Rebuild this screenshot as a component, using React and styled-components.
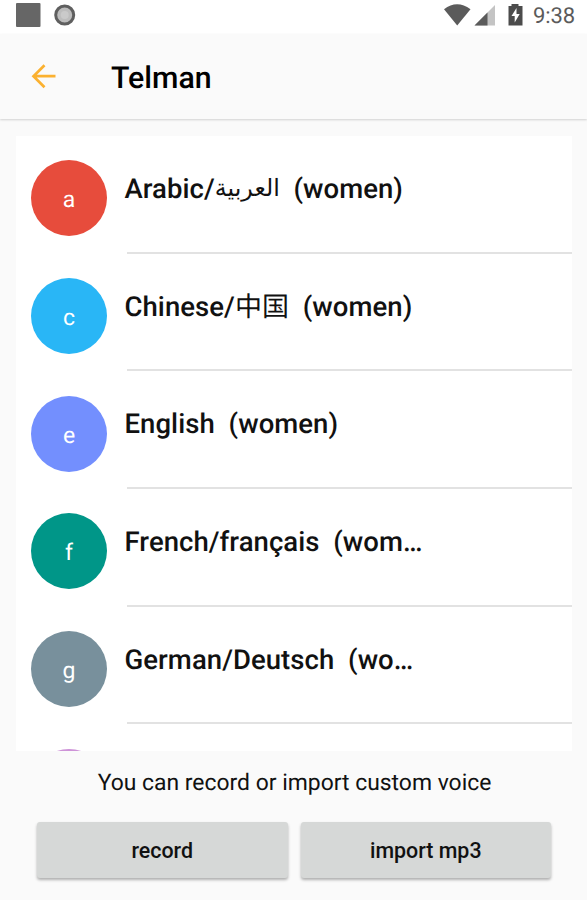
import styled, { createGlobalStyle } from "styled-components";

const GlobalStyle = createGlobalStyle`
    * {
        box-sizing: border-box;
    }

    body {
        margin: 0;
        background-color: #fafafa;
        color: #111;
        font-family: Roboto, "Noto Sans CJK SC", "DejaVu Sans", sans-serif;
        text-rendering: geometricPrecision;
    }
`

const Screen = styled.div`
    width: 100%;
    height: 900px;
    overflow: hidden;
    display: flex;
    flex-direction: column;
    background-color: #fafafa;
`

const StatusBar = styled.div`
    height: 34px;
    flex: none;
    display: flex;
    justify-content: space-between;
    background-color: white;
    color: #5b5b5b;
`

const StatusIcons = styled.svg`
    width: ${props => props.$width}px;
    height: 34px;
    display: block;
`

const StatusRight = styled.div`
    display: flex;
    padding-right: 12px;
`

const Clock = styled.span`
    font-size: 22px;
    line-height: 33px;
    letter-spacing: -0.1px;
`

const Header = styled.header`
    height: 85px;
    flex: none;
    display: flex;
    align-items: center;
    padding-left: 30px;
    background-color: #fafafa;
    box-shadow: 0 1px 2px rgb(0 0 0 / 16%);
`

const BackButton = styled.button`
    width: 28px;
    height: 28px;
    padding: 0;
    border: none;
    background: none;
    display: grid;
    place-content: center;
`

const Title = styled.h1`
    margin: 5px 0 0 53px;
    font-size: 30.3px;
    font-weight: 500;
    line-height: 36px;
    color: black;
`

const VoiceList = styled.ul`
    height: 615px;
    flex: none;
    margin: 17px 15px 0 16px;
    padding: 0;
    list-style: none;
    overflow: hidden;
    background-color: white;
`

const VoiceItem = styled.li`
    height: 117.7px;
    display: flex;
    padding-left: 15px;
`

const Avatar = styled.div`
    width: 76px;
    height: 76px;
    flex: none;
    margin-top: 24.3px;
    border-radius: 50%;
    background-color: ${props => props.$color};
    color: white;
    font-size: 23px;
    line-height: 79px;
    text-align: center;
`

const VoiceBody = styled.div`
    flex: 1;
    min-width: 0;
    margin-left: 20px;
    border-bottom: 2px solid #e2e2e2;
`

const VoiceName = styled.div`
    width: 304px;
    margin: 36px 0 0 -2.5px;
    font-size: 27.5px;
    font-weight: 500;
    line-height: 33px;
    letter-spacing: 0.06px;
    white-space: pre;
`

const NativeName = styled.span`
    font-size: ${props => props.$size}px;
    font-weight: 400;
    line-height: 1;
    vertical-align: ${props => props.$lift || 0}px;
`

const Hint = styled.p`
    margin: 17px 0 0;
    font-size: 22.9px;
    line-height: 30px;
    text-align: center;
    padding-left: 2px;
`

const Actions = styled.div`
    display: flex;
    gap: 13px;
    margin: 24px 36px 0 37px;
`

const ActionButton = styled.button`
    flex: 1;
    height: 56px;
    padding: 0;
    border: none;
    border-radius: 3px;
    background-color: #d6d8d7;
    box-shadow: 0 2px 3px rgb(0 0 0 / 30%);
    color: #111;
    font-family: inherit;
    font-size: 21.4px;
    font-weight: 500;
`

const voices = [
    { letter: "a", color: "#e74c3c", name: "Arabic/", native: "العربية", size: 23.8, lift: 2, suffix: "  (women)" },
    { letter: "c", color: "#29b6f6", name: "Chinese/", native: "中国", size: 27, suffix: "  (women)" },
    { letter: "e", color: "#738ffe", name: "English", suffix: "  (women)" },
    { letter: "f", color: "#009688", name: "French/français", suffix: "  (wom…" },
    { letter: "g", color: "#78909c", name: "German/Deutsch", suffix: "  (wo…" },
]

const Voice = ({ letter, color, name, native, size, lift, suffix }) => {
    return (
        <VoiceItem>
            <Avatar $color={color}>{letter}</Avatar>
            <VoiceBody>
                <VoiceName>
                    {name}
                    {native && <NativeName $size={size} $lift={lift}>{native}</NativeName>}
                    {suffix}
                </VoiceName>
            </VoiceBody>
        </VoiceItem>
    );
}

const App = () => {
    return (
        <Screen>
            <GlobalStyle />
            <StatusBar>
                <StatusIcons $width={90} viewBox="0 0 90 34">
                    <rect x="16" y="3" width="24.5" height="24" rx="1" fill="#666" />
                    <circle cx="64.7" cy="15" r="9" fill="#bdbdbd" stroke="#5f5f5f" strokeWidth="3" />
                    <circle cx="64.7" cy="15" r="4" fill="#cacaca" />
                </StatusIcons>
                <StatusRight>
                    <StatusIcons $width={90} viewBox="443 0 90 34">
                        <path d="M444 9.2Q457 -0.5 470.5 9.2L457.2 25.5Z" fill="#5b5b5b" />
                        <path d="M495 5V25.5H474.5Z" fill="#c4c4c4" />
                        <path d="M487.5 12.5V25.5H474.5Z" fill="#5b5b5b" />
                        <path d="M508.5 6h3V4h7v2h4v19.5h-14z" fill="#4c4c4c" />
                        <path d="M516.5 8l-5 8h3.2v6.5l5-8.5h-3.2z" fill="white" />
                    </StatusIcons>
                    <Clock>9:38</Clock>
                </StatusRight>
            </StatusBar>
            <Header>
                <BackButton aria-label="Back">
                    <svg width="28" height="28" viewBox="0 0 28 28" fill="none" stroke="#fbb130" strokeWidth="2.7">
                        <path d="M25.5 13.2H3.5M14.5 2.2L3.5 13.2L14.5 24.2" />
                    </svg>
                </BackButton>
                <Title>Telman</Title>
            </Header>
            <VoiceList>
                {voices.map(voice => <Voice key={voice.letter} {...voice} />)}
                {/* next voice, scrolled below the edge */}
                <VoiceItem>
                    <Avatar $color="#ce93d8" />
                </VoiceItem>
            </VoiceList>
            <Hint>You can record or import custom voice</Hint>
            <Actions>
                <ActionButton>record</ActionButton>
                <ActionButton>import mp3</ActionButton>
            </Actions>
        </Screen>
    );
}

export default App;
